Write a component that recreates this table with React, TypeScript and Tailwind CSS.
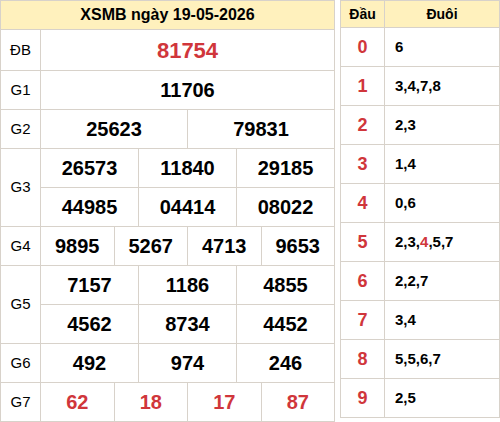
import React from "react";

const red = "text-[#d0363b]";

type Prize = { label: string; rows: string[][]; red?: boolean; big?: boolean };

const prizes: Prize[] = [
  { label: "ĐB", rows: [["81754"]], red: true, big: true },
  { label: "G1", rows: [["11706"]] },
  { label: "G2", rows: [["25623", "79831"]] },
  { label: "G3", rows: [["26573", "11840", "29185"], ["44985", "04414", "08022"]] },
  { label: "G4", rows: [["9895", "5267", "4713", "9653"]] },
  { label: "G5", rows: [["7157", "1186", "4855"], ["4562", "8734", "4452"]] },
  { label: "G6", rows: [["492", "974", "246"]] },
  { label: "G7", rows: [["62", "18", "17", "87"]], red: true },
];

const tails: { head: string; tail: React.ReactNode }[] = [
  { head: "0", tail: "6" },
  { head: "1", tail: "3,4,7,8" },
  { head: "2", tail: "2,3" },
  { head: "3", tail: "1,4" },
  { head: "4", tail: "0,6" },
  { head: "5", tail: <>2,3,<span className={red}>4</span>,5,7</> },
  { head: "6", tail: "2,2,7" },
  { head: "7", tail: "3,4" },
  { head: "8", tail: "5,5,6,7" },
  { head: "9", tail: "2,5" },
];

// 12 columns so 1, 2, 3 and 4 numbers per row all divide evenly
const span: Record<number, number> = { 1: 12, 2: 6, 3: 4, 4: 3 };

export default function App() {
  return (
    <div className="flex items-start gap-[5px] w-[500px] h-[422px] bg-white font-['Liberation_Sans',Arial,sans-serif] text-black">
      <table className="w-[335px] table-fixed border-collapse">
        <colgroup>
          <col className="w-[40px]" />
          {Array.from({ length: 12 }).map((_, i) => (
            <col key={i} />
          ))}
        </colgroup>
        <thead>
          <tr>
            <th
              colSpan={13}
              className="h-[29px] border border-[#d8d2ca] bg-[#fff1bd] text-[16px] font-bold p-0"
            >
              XSMB ngày 19-05-2026
            </th>
          </tr>
        </thead>
        <tbody>
          {prizes.map((p) =>
            p.rows.map((row, ri) => (
              <tr key={p.label + ri}>
                {ri === 0 && (
                  <td
                    rowSpan={p.rows.length}
                    className="border border-[#d8d2ca] text-center text-[15px] p-0"
                  >
                    {p.label}
                  </td>
                )}
                {row.map((n, ci) => (
                  <td
                    key={ci}
                    colSpan={span[row.length]}
                    className={`border border-[#d8d2ca] text-center font-bold p-0 ${
                      p.big ? "h-[41px] text-[22px]" : "h-[39px] text-[20px]"
                    } ${p.red ? red : ""}`}
                  >
                    {n}
                  </td>
                ))}
              </tr>
            ))
          )}
        </tbody>
      </table>

      <table className="w-[160px] table-fixed border-collapse">
        <colgroup>
          <col className="w-[44px]" />
          <col />
        </colgroup>
        <thead>
          <tr>
            <th className="h-[27px] border border-[#d8d2ca] bg-[#fff1bd] text-[14px] font-bold p-0">
              Đầu
            </th>
            <th className="border border-[#d8d2ca] bg-[#fff1bd] text-[14px] font-bold p-0">
              Đuôi
            </th>
          </tr>
        </thead>
        <tbody>
          {tails.map((t) => (
            <tr key={t.head}>
              <td className={`h-[39px] border border-[#d8d2ca] text-center text-[18px] font-bold p-0 ${red}`}>
                {t.head}
              </td>
              <td className="border border-[#d8d2ca] pl-[10px] text-[15px] font-bold">
                {t.tail}
              </td>
            </tr>
          ))}
        </tbody>
      </table>
    </div>
  );
}
